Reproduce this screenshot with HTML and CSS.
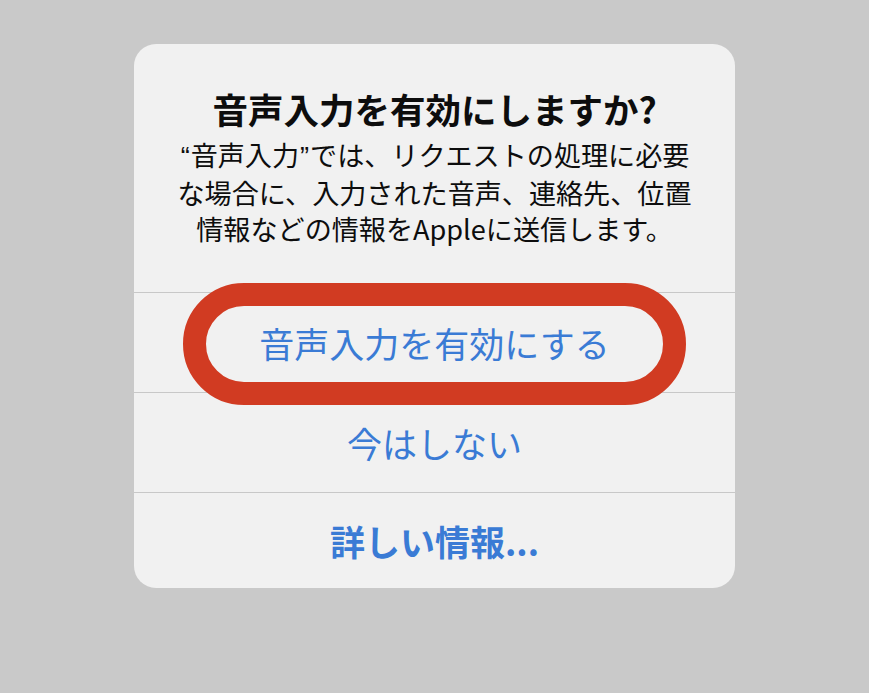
FILE: index.html
```html
<!DOCTYPE html>
<html lang="ja">
<head>
<meta charset="utf-8">
<title>音声入力を有効にしますか?</title>
<link rel="stylesheet" href="styles.css">
</head>
<body>
<div class="alert">
  <div class="alert-header">
    <h1 class="alert-title">音声入力を有効にしますか?</h1>
    <p class="alert-message"><span class="quote">“</span>音声入力<span class="quote">”</span>では、リクエストの処理に必要<br>な場合に、入力された音声、連絡先、位置<br>情報などの情報をAppleに送信します。</p>
  </div>
  <div class="alert-actions">
    <button class="alert-btn">音声入力を有効にする</button>
    <button class="alert-btn">今はしない</button>
    <button class="alert-btn alert-btn-bold">詳しい情報...</button>
  </div>
  <div class="highlight-ring"></div>
</div>
</body>
</html>
```
FILE: styles.css
```css
html, body {
  margin: 0;
  padding: 0;
}
body {
  background: #c9c9c9;
  width: 869px;
  height: 693px;
  overflow: hidden;
  padding-top: 44px;
  box-sizing: border-box;
  font-family: "Noto Sans CJK JP", "Noto Sans", sans-serif;
}
.alert {
  position: relative;
  width: 601px;
  height: 544px;
  margin: 0 auto;
  background: #f1f1f1;
  border-radius: 22px;
  display: flex;
  flex-direction: column;
  overflow: hidden;
}
.alert-header {
  height: 248px;
  box-sizing: border-box;
  padding: 44px 10px 0;
  text-align: center;
  color: #0d0d0d;
}
.alert-title {
  margin: 0 0 7px;
  font-size: 35.5px;
  line-height: 42px;
  font-weight: 700;
}
.alert-message {
  margin: 0;
  font-size: 27.1px;
  line-height: 36px;
  font-weight: 400;
}
.quote {
  font-family: "Liberation Sans", sans-serif;
  margin: 0 1px;
}
.alert-actions {
  flex: 1;
  display: flex;
  flex-direction: column;
}
.alert-btn {
  height: 100px;
  flex: none;
  border: 0;
  border-top: 1px solid #c8c8c8;
  background: transparent;
  color: #3a7bd5;
  font-family: inherit;
  font-size: 35px;
  font-weight: 400;
  padding: 0;
  margin: 0;
  display: flex;
  align-items: center;
  justify-content: center;
}
.alert-btn-bold {
  flex: 1;
  height: auto;
  font-weight: 700;
}
.highlight-ring {
  position: absolute;
  left: 49px;
  top: 239px;
  width: 503px;
  height: 122px;
  box-sizing: border-box;
  border: 23px solid #d13b22;
  border-radius: 61px;
  pointer-events: none;
}
```
